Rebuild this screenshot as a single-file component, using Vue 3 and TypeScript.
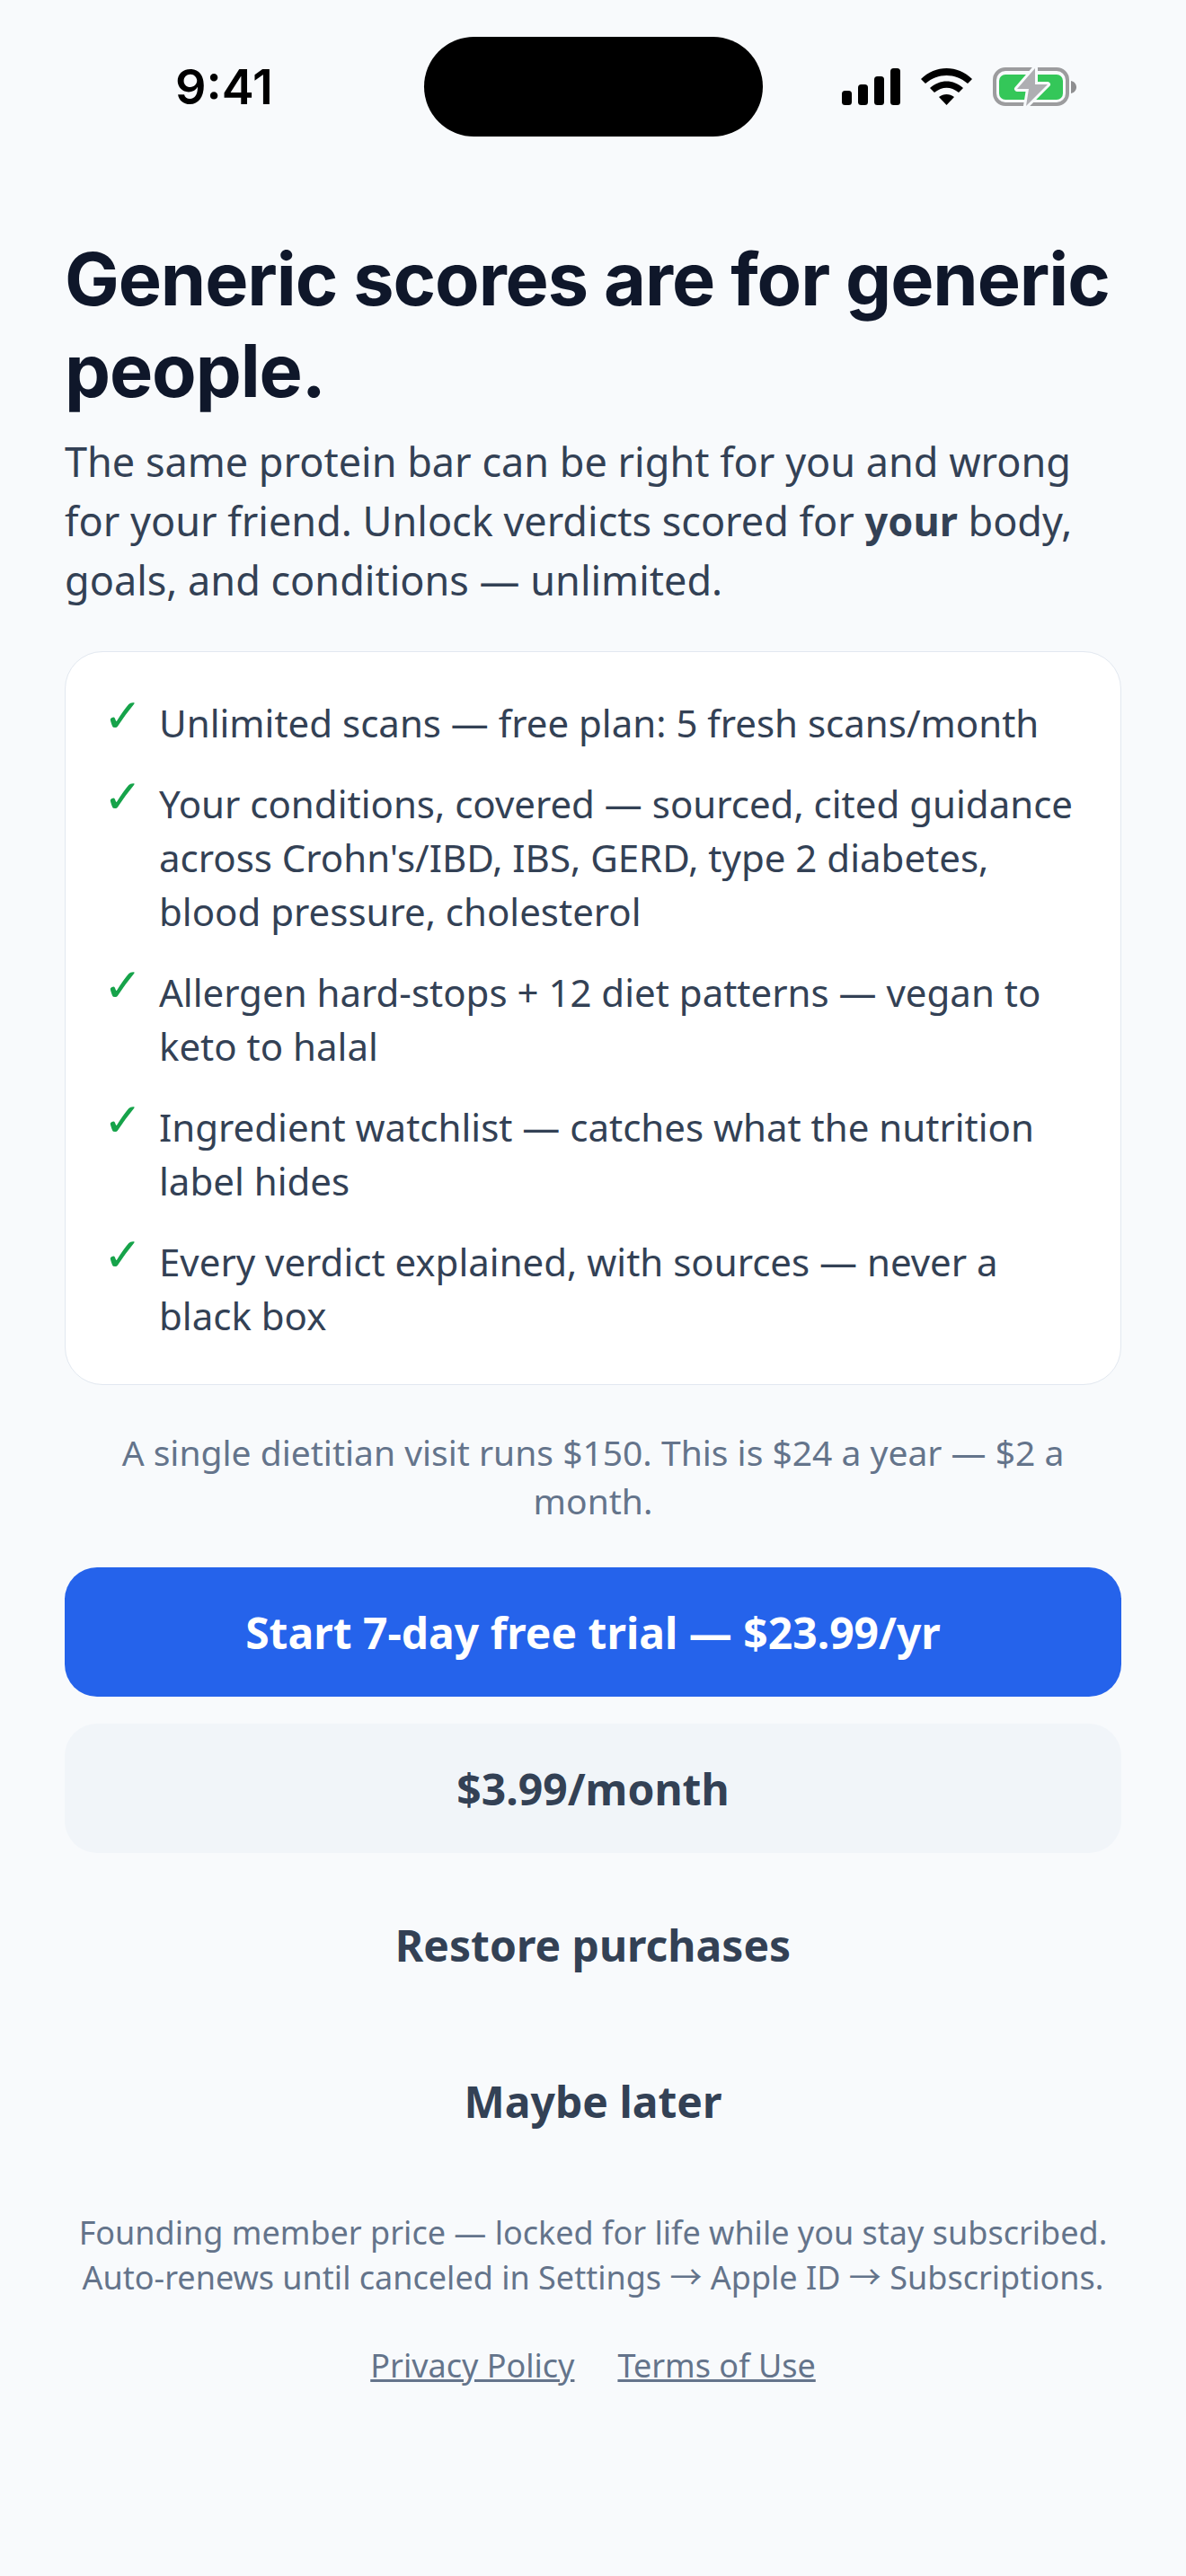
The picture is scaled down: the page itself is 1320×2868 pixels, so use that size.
<script setup lang="ts">
const features: string[] = [
  'Unlimited scans — free plan: 5 fresh scans/month',
  "Your conditions, covered — sourced, cited guidance across Crohn's/IBD, IBS, GERD, type 2 diabetes, blood pressure, cholesterol",
  'Allergen hard-stops + 12 diet patterns — vegan to keto to halal',
  'Ingredient watchlist — catches what the nutrition label hides',
  'Every verdict explained, with sources — never a black box',
]
</script>

<template>
  <div class="screen">
    <header class="status">
      <span class="time">9:41</span>
      <div class="island"></div>
      <div class="status-icons">
        <svg width="65" height="42" viewBox="0 0 65 42">
          <rect x="0" y="25" width="11" height="16" rx="3.5" fill="#000" />
          <rect x="18" y="18" width="11" height="23" rx="3.5" fill="#000" />
          <rect x="36" y="9" width="11" height="32" rx="3.5" fill="#000" />
          <rect x="54" y="0" width="11" height="41" rx="3.5" fill="#000" />
        </svg>
        <svg width="57" height="42" viewBox="0 0 57 42">
          <path d="M0 12 C16 -4 41 -4 57 12 L52 17 C38 5 19 5 5 17 Z" fill="#000" />
          <path d="M10 22 C21 12 36 12 47 22 L42 27 C33 20 24 20 15 27 Z" fill="#000" />
          <path d="M20 32 C25 28 32 28 37 32 L28.5 41 Z" fill="#000" />
        </svg>
        <svg width="93" height="46" viewBox="0 0 93 46">
          <rect x="2" y="3" width="81" height="39" rx="12" fill="none" stroke="#9c9c9e" stroke-width="4" />
          <rect x="7" y="9" width="71" height="28" rx="7" fill="#34c759" />
          <path d="M87 16 C91 17 93 20 93 23 C93 26 91 29 87 30 Z" fill="#8e8e90" />
          <path d="M47 2 L27 25 H40 L37 44 L61 20 H47 Z" fill="#aeaeb2" stroke="#f8fafc" stroke-width="6" stroke-linejoin="round" paint-order="stroke" />
        </svg>
      </div>
    </header>

    <main class="content">
      <h1>Generic scores are for generic people.</h1>
      <p class="lead">
        The same protein bar can be right for you and wrong for your friend. Unlock verdicts scored for
        <strong>your</strong> body, goals, and conditions — unlimited.
      </p>

      <ul class="card">
        <li v-for="item in features" :key="item">
          <span class="check">✓</span>
          <span>{{ item }}</span>
        </li>
      </ul>

      <p class="compare">A single dietitian visit runs $150. This is $24 a year — $2 a month.</p>

      <button class="btn primary">Start 7-day free trial — $23.99/yr</button>
      <button class="btn secondary">$3.99/month</button>
      <button class="btn ghost">Restore purchases</button>
      <button class="btn ghost">Maybe later</button>

      <p class="legal">
        Founding member price — locked for life while you stay subscribed.
        Auto-renews until canceled in Settings → Apple ID → Subscriptions.
      </p>
      <div class="links">
        <a href="#">Privacy Policy</a>
        <a href="#">Terms of Use</a>
      </div>
    </main>
  </div>
</template>

<style scoped>
.screen {
  width: 1320px;
  height: 2868px;
  background: #f8fafc;
  font-family: "Noto Sans", sans-serif;
  overflow: hidden;
}

.status {
  display: grid;
  grid-template-columns: 1fr auto 1fr;
  align-items: center;
  height: 111px;
  padding-top: 41px;
}

.time {
  padding-left: 195px;
  font-family: Inter, sans-serif;
  font-size: 54px;
  font-weight: 600;
  color: #000;
}

.island {
  width: 377px;
  height: 111px;
  border-radius: 56px;
  background: #000;
}

.status-icons {
  display: flex;
  align-items: center;
  justify-content: flex-end;
  gap: 23px;
  padding-right: 122px;
}

.content {
  display: flex;
  flex-direction: column;
  padding: 108px 72px 0;
}

h1 {
  margin: 0;
  font-family: Inter, sans-serif;
  font-size: 81px;
  line-height: 102px;
  font-weight: 700;
  letter-spacing: -1.1px;
  color: #0f172a;
}

.lead {
  margin: 17px 0 0;
  font-size: 45px;
  line-height: 66px;
  color: #334155;
}

.lead strong {
  font-weight: 700;
}

.card {
  list-style: none;
  margin: 46px 0 0;
  padding: 48.5px 48px 46.5px;
  background: #fff;
  border: 1.5px solid #e2e8f0;
  border-radius: 42px;
  display: flex;
  flex-direction: column;
  gap: 30px;
}

.card li {
  display: flex;
  gap: 24px;
  font-size: 42px;
  line-height: 60px;
  color: #334155;
}

.check {
  flex: none;
  width: 38px;
  margin-left: -6px;
  color: #16a34a;
  font-size: 52px;
  line-height: 40px;
}

.compare {
  margin: 48px 24px 0;
  text-align: center;
  font-size: 39px;
  line-height: 54px;
  color: #64748b;
}

.btn {
  border: 0;
  font-family: inherit;
  font-weight: 700;
  font-size: 48px;
  height: 144px;
  border-radius: 36px;
  color: #334155;
  background: none;
}

.primary {
  margin-top: 47px;
  background: #2563eb;
  color: #fff;
}

.secondary {
  margin-top: 30px;
  background: #f1f5f9;
}

.ghost {
  margin-top: 30px;
}

.legal {
  margin: 50px 0 0;
  text-align: center;
  font-family: "Noto Sans", "Noto Sans CJK SC", sans-serif;
  font-size: 36px;
  line-height: 50px;
  color: #64748b;
}

.links {
  display: flex;
  justify-content: center;
  gap: 48px;
  margin-top: 49px;
}

.links a {
  font-size: 36px;
  line-height: 48px;
  color: #64748b;
}
</style>
